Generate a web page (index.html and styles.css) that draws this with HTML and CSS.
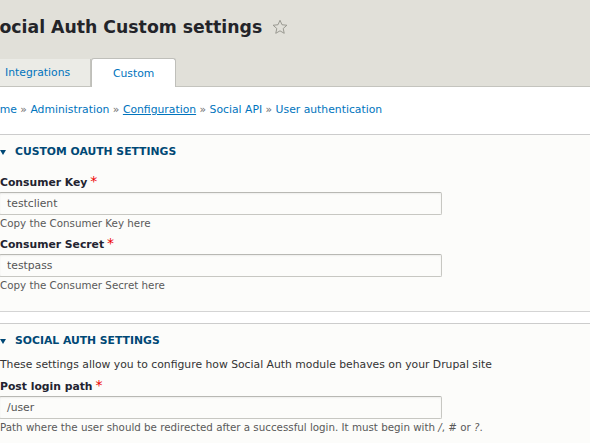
FILE: index.html
```html
<!DOCTYPE html>
<html>
<head>
<meta charset="utf-8">
<link rel="stylesheet" href="styles.css">
</head>
<body>
<header class="header">
  <h1 class="title">Social Auth Custom settings <svg class="star" width="16" height="16" viewBox="0 0 20 20"><path d="M10 1.6l2.5 5.6 6.1.6-4.6 4.1 1.3 6-5.3-3.1-5.3 3.1 1.3-6-4.6-4.1 6.1-.6z" fill="none" stroke="#8f8f88" stroke-width="1.1" stroke-linejoin="round"/></svg></h1>
  <nav class="tabs">
    <a class="tab">Integrations</a>
    <a class="tab active">Custom</a>
  </nav>
</header>
<div class="breadcrumb">
  <a>Home</a> <span class="sep">»</span> <a>Administration</a> <span class="sep">»</span> <a class="u">Configuration</a> <span class="sep">»</span> <a>Social API</a> <span class="sep">»</span> <a>User authentication</a>
</div>
<section class="fieldset first">
  <div class="legend"><svg class="tri" width="6" height="5" viewBox="0 0 6 5"><path d="M0 0h6L3 5z" fill="#004875"/></svg>CUSTOM OAUTH SETTINGS</div>
  <div class="item">
    <label class="label">Consumer Key<span class="req">*</span></label>
    <div class="input">testclient</div>
    <div class="desc">Copy the Consumer Key here</div>
  </div>
  <div class="item next">
    <label class="label">Consumer Secret<span class="req">*</span></label>
    <div class="input">testpass</div>
    <div class="desc">Copy the Consumer Secret here</div>
  </div>
</section>
<section class="fieldset second">
  <div class="legend"><svg class="tri" width="6" height="5" viewBox="0 0 6 5"><path d="M0 0h6L3 5z" fill="#004875"/></svg>SOCIAL AUTH SETTINGS</div>
  <p class="intro">These settings allow you to configure how Social Auth module behaves on your Drupal site</p>
  <div class="item tight">
    <label class="label">Post login path<span class="req">*</span></label>
    <div class="input">/user</div>
    <div class="desc">Path where the user should be redirected after a successful login. It must begin with <i>/</i>, <i>#</i> or <i>?</i>.</div>
  </div>
</section>
</body>
</html>
```

FILE: styles.css
```css
html, body {
  margin: 0;
  padding: 0;
  background: #ffffff;
  font-family: "DejaVu Sans", Verdana, sans-serif;
  color: #222330;
  overflow: hidden;
}
.header {
  background: #e1e0d9;
  border-bottom: 1px solid #c4c4be;
  padding-top: 13px;
  margin-left: -15px;
}
.title {
  margin: 0 0 0 2px;
  font-size: 17.3px;
  line-height: 28px;
  font-weight: bold;
  color: #232429;
  display: flex;
  align-items: center;
  white-space: pre;
}
.star {
  margin-left: 4px;
  margin-top: -1px;
}
.tabs {
  display: flex;
  align-items: flex-end;
  margin-top: 17px;
  margin-bottom: -1px;
}
.tab {
  font-size: 10.8px;
  color: #0074bd;
  text-decoration: none;
  box-sizing: border-box;
}
.tab:first-child {
  background: #ebebe6;
  height: 27px;
  line-height: 28px;
  margin-bottom: 1px;
  padding: 0 20px 0 20px;
  border-right: 1px solid #c4c4be;
}
.tab.active {
  background: #ffffff;
  height: 29px;
  line-height: 29px;
  padding: 0 20px;
  border: 1px solid #bfbfba;
  border-bottom: none;
  border-radius: 3px 3px 0 0;
  width: 85px;
  text-align: center;
}
.breadcrumb {
  margin: 14px 0 15px -15px;
  font-size: 10.8px;
  line-height: 18px;
  color: #595959;
  white-space: nowrap;
}
.breadcrumb a {
  color: #0074bd;
  text-decoration: none;
}
.breadcrumb a.u {
  text-decoration: underline;
}
.breadcrumb .sep {
  color: #6b6b6b;
}
.fieldset {
  background: #fcfcfa;
  border-top: 1px solid #cccccc;
  border-bottom: 1px solid #d4d4d4;
  padding: 8px 0 0 0;
}
.fieldset.first {
  padding-bottom: 18px;
  margin-bottom: 11px;
}
.fieldset.second {
  padding-bottom: 20px;
  border-bottom: none;
}
.legend {
  display: flex;
  align-items: center;
  font-size: 10.8px;
  line-height: 18px;
  font-weight: bold;
  color: #004875;
}
.tri {
  margin: 0 9px 0 0;
}
.item {
  margin-top: 13px;
}
.item.next {
  margin-top: 5px;
}
.item.tight {
  margin-top: 4px;
}
.label {
  display: block;
  font-size: 10.8px;
  line-height: 18px;
  font-weight: bold;
  color: #222330;
}
.req {
  color: #e00;
  margin-left: 3px;
  font-weight: normal;
  font-size: 14px;
  line-height: 10px;
  vertical-align: 0;
}
.input {
  box-sizing: border-box;
  width: 443px;
  height: 23px;
  margin-left: -1px;
  border: 1px solid #c7c7c2;
  border-top-color: #b8b8b3;
  border-radius: 2px;
  background: #fcfcfa;
  padding-left: 7px;
  font-size: 10.8px;
  line-height: 21px;
  color: #555555;
  box-shadow: inset 0 1px 2px rgba(0,0,0,0.06);
}
.desc {
  font-size: 10.3px;
  line-height: 16px;
  color: #595959;
}
.intro {
  margin: 6px 0 0 0;
  font-size: 10.8px;
  line-height: 18px;
  color: #333333;
}
```
